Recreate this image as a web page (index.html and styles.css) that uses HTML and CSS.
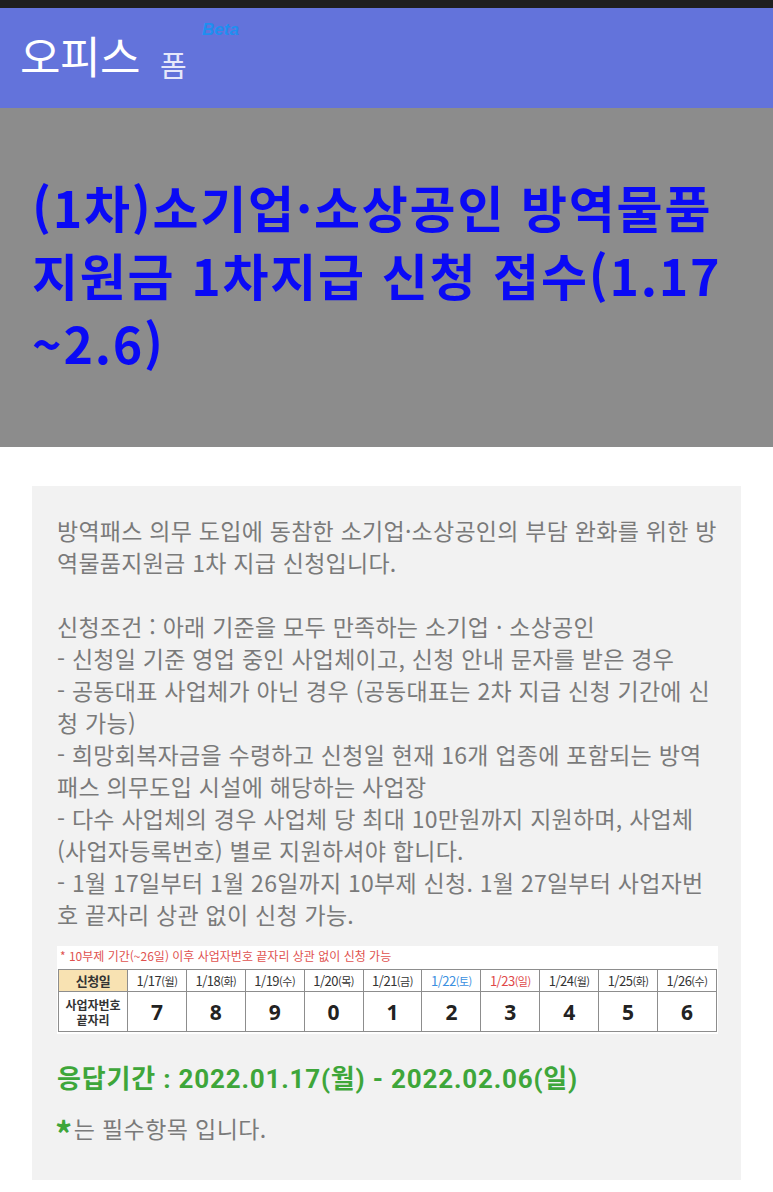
FILE: index.html
```html
<!DOCTYPE html>
<html lang="ko">
<head>
<meta charset="utf-8">
<title>오피스 폼</title>
<link rel="stylesheet" href="styles.css">
</head>
<body>
<div class="statusbar"></div>
<header class="appbar">
  <span class="brand">오피스</span>
  <span class="brand-sub">폼</span>
  <span class="beta">Beta</span>
</header>
<section class="hero">
  <h1 class="title">(1차)소기업·소상공인 방역물품<br>지원금 1차지급 신청 접수(1.17<br>~2.6)</h1>
</section>
<main class="card">
  <p class="desc">방역패스 의무 도입에 동참한 소기업·소상공인의 부담 완화를 위한 방<br>역물품지원금 1차 지급 신청입니다.<br><br>신청조건 : 아래 기준을 모두 만족하는 소기업 · 소상공인<br>- 신청일 기준 영업 중인 사업체이고, 신청 안내 문자를 받은 경우<br>- 공동대표 사업체가 아닌 경우 (공동대표는 2차 지급 신청 기간에 신<br>청 가능)<br>- 희망회복자금을 수령하고 신청일 현재 16개 업종에 포함되는 방역<br>패스 의무도입 시설에 해당하는 사업장<br>- 다수 사업체의 경우 사업체 당 최대 10만원까지 지원하며, 사업체<br>(사업자등록번호) 별로 지원하셔야 합니다.<br>- 1월 17일부터 1월 26일까지 10부제 신청. 1월 27일부터 사업자번<br>호 끝자리 상관 없이 신청 가능.</p>
  <div class="notice">
    <div class="notice-cap">* 10부제 기간(~26일) 이후 사업자번호 끝자리 상관 없이 신청 가능</div>
    <table class="sched">
      <tr class="row-date">
        <th class="label">신청일</th>
        <td>1/17<small>(월)</small></td>
        <td>1/18<small>(화)</small></td>
        <td>1/19<small>(수)</small></td>
        <td>1/20<small>(목)</small></td>
        <td>1/21<small>(금)</small></td>
        <td class="sat">1/22<small>(토)</small></td>
        <td class="sun">1/23<small>(일)</small></td>
        <td>1/24<small>(월)</small></td>
        <td>1/25<small>(화)</small></td>
        <td>1/26<small>(수)</small></td>
      </tr>
      <tr class="row-num">
        <th class="label2">사업자번호<br>끝자리</th>
        <td>7</td><td>8</td><td>9</td><td>0</td><td>1</td><td>2</td><td>3</td><td>4</td><td>5</td><td>6</td>
      </tr>
    </table>
  </div>
  <p class="period">응답기간 : 2022.01.17(월) - 2022.02.06(일)</p>
  <p class="required"><span class="star">*</span>는 필수항목 입니다.</p>
</main>
</body>
</html>
```
FILE: styles.css
```css
html, body {
  margin: 0;
  padding: 0;
  background: #ffffff;
  font-family: "Noto Sans CJK KR", "Noto Sans", sans-serif;
}
.statusbar {
  height: 8px;
  background: #1f1f1f;
}
.appbar {
  height: 100px;
  background: #6373db;
  display: flex;
  align-items: center;
  padding-left: 20px;
  box-sizing: border-box;
  position: relative;
}
.brand {
  color: #ffffff;
  font-size: 44px;
  line-height: 1;
  margin-top: -6px;
  letter-spacing: -0.5px;
}
.brand-sub {
  color: #e6e8fa;
  font-size: 29px;
  margin-left: 20px;
  margin-top: 12px;
  line-height: 1;
}
.beta {
  position: absolute;
  left: 202px;
  top: 12px;
  color: #1e8ff0;
  font-family: "Liberation Sans", sans-serif;
  font-style: italic;
  font-weight: bold;
  font-size: 17px;
}
.hero {
  background: #8c8c8c;
  height: 339px;
  box-sizing: border-box;
  padding: 64px 10px 0 32px;
}
.title {
  margin: 0;
  color: #0a0af5;
  font-size: 50px;
  line-height: 68px;
  font-weight: bold;
  letter-spacing: 1.8px;
  white-space: nowrap;
}
.card {
  display: block;
  background: #f2f2f2;
  margin: 39px 32px 0 32px;
  padding: 28px 22px 30px 25px;
}
.desc {
  margin: 0;
  color: #7a7a7a;
  font-size: 23px;
  line-height: 32px;
  white-space: nowrap;
  letter-spacing: 0.25px;
}
.notice {
  background: #ffffff;
  margin-top: 16px;
  width: 661px;
  padding: 3px 0 2px 0;
  box-sizing: border-box;
}
.notice-cap {
  color: #e0524f;
  font-size: 12px;
  line-height: 14px;
  padding-left: 3px;
  margin-bottom: 6px;
}
.sched {
  border-collapse: collapse;
  width: 659px;
  margin-left: 1px;
  table-layout: fixed;
}
.sched th, .sched td {
  border: 1px solid #8d8d8d;
  text-align: center;
  padding: 0;
  color: #333333;
}
.sched .label {
  width: 68px;
  background: #f8e2b2;
  font-size: 13px;
  font-weight: bold;
}
.sched .label2 {
  background: #ffffff;
  font-size: 12px;
  line-height: 15px;
  font-weight: bold;
}
.row-date td, .row-date th {
  height: 21px;
  font-size: 13px;
  letter-spacing: -0.5px;
}
.row-date small {
  font-size: 11px;
}
.row-date .sat {
  color: #3a8fe0;
}
.row-date .sun {
  color: #e04848;
}
.row-num td, .row-num th {
  height: 39px;
}
.row-num td {
  font-family: "Noto Sans", sans-serif;
  font-size: 21px;
  font-weight: bold;
  color: #222222;
}
.period {
  margin: 28px 0 0 0;
  color: #3ea63a;
  font-size: 26px;
  line-height: 34px;
  font-weight: bold;
  letter-spacing: 0.8px;
  font-family: Roboto, "Noto Sans CJK KR", sans-serif;
}
.required {
  margin: 16px 0 0 -2px;
  color: #7a7a7a;
  font-size: 23px;
  line-height: 32px;
  letter-spacing: 0.4px;
}
.star {
  color: #3ea63a;
  font-weight: bold;
  font-size: 34px;
  vertical-align: -9px;
  line-height: 1;
  margin-right: 1px;
}
```
